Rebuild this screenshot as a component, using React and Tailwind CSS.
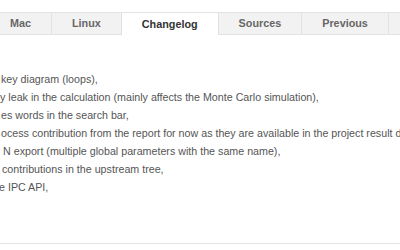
import React from "react";

const tabs = ["Mac", "Linux", "Changelog", "Sources", "Previous", "Older"];

const lines = [
  { text: "key diagram (loops),", pad: "pl-[1px]" },
  { text: "y leak in the calculation (mainly affects the Monte Carlo simulation),", pad: "pl-0" },
  { text: "es words in the search bar,", pad: "pl-[1px]" },
  { text: "ocess contribution from the report for now as they are available in the project result data,", pad: "pl-[1px]" },
  { text: "N export (multiple global parameters with the same name),", pad: "pl-[3px]" },
  { text: "contributions in the upstream tree,", pad: "pl-[2px]" },
  { text: "e IPC API,", pad: "-ml-[1px]" },
];

export default function App() {
  return (
    <div className="w-[400px] h-[250px] bg-white overflow-hidden font-['Liberation_Sans',Arial,sans-serif]">
      {/* Tabs */}
      <div className="flex pt-[12px] -ml-[10px] whitespace-nowrap">
        {tabs.map((t) => {
          const active = t === "Changelog";
          return (
            <div
              key={t}
              className={
                active
                  ? "h-[23px] px-[20px] flex items-center border-t border-r border-[#e2e2e2] bg-white text-[#333] font-bold text-[10.8px]"
                  : "h-[23px] px-[20px] flex items-center border-t border-b border-r border-[#e2e2e2] bg-[#f2f2f2] text-[#666] font-bold text-[10.8px]"
              }
            >
              {t}
            </div>
          );
        })}
      </div>

      {/* Changelog content */}
      <div className="pt-[35px] h-[208px] text-[10.7px] leading-[18px] text-[#555] whitespace-nowrap">
        {lines.map((l, i) => (
          <div key={i} className={l.pad}>
            {l.text}
          </div>
        ))}
      </div>

      <div className="h-px bg-[#e3e3e3]" />
    </div>
  );
}
